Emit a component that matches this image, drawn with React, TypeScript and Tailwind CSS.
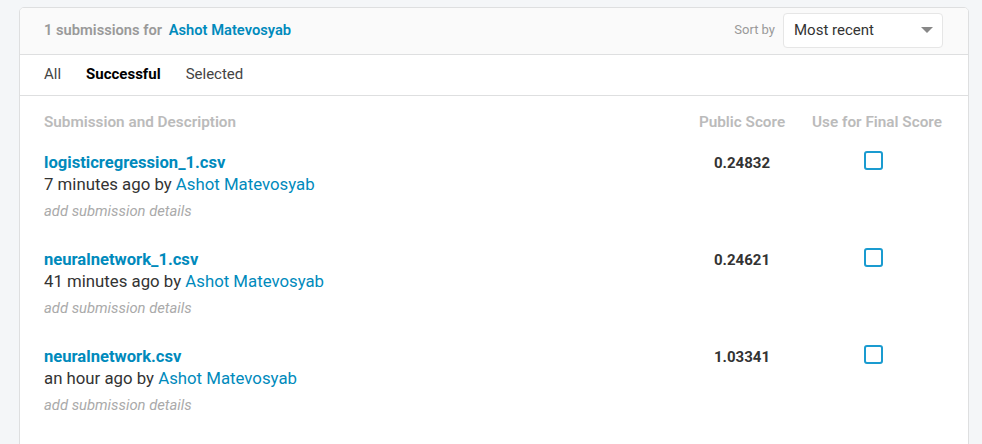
const rows = [
  { file: 'logisticregression_1.csv', when: '7 minutes ago', score: '0.24832' },
  { file: 'neuralnetwork_1.csv', when: '41 minutes ago', score: '0.24621' },
  { file: 'neuralnetwork.csv', when: 'an hour ago', score: '1.03341' },
]

export default function App() {
  return (
    <div className="min-h-screen bg-[#f4f6f8] pl-[19px] pr-[13px] pt-[7px] font-['Roboto',sans-serif]">
      {/* Card */}
      <div className="bg-white border border-[#dedfe0] rounded-t-[5px] overflow-hidden h-[440px]">
        {/* Header */}
        <div className="h-[47px] bg-[#fafafa] border-b border-[#dedfe0] flex items-center justify-between px-6">
          <div className="text-[14.7px] font-semibold text-[#999] -mt-[1px]">
            1 submissions for <span className="ml-[3px] text-[#008abc]">Ashot Matevosyab</span>
          </div>
          <div className="flex items-center gap-[8px] mr-[1px] -mt-[2px]">
            <span className="text-[13px] text-[#999]">Sort by</span>
            <div className="w-[160px] h-[35px] bg-white border border-[#e6e6e6] rounded-[4px] flex items-center justify-between pl-[10px] pr-[9px]">
              <span className="text-[15px] text-[#333]">Most recent</span>
              <svg width="12" height="6" viewBox="0 0 12 6"><path d="M0 0h12L6 6z" fill="#888" /></svg>
            </div>
          </div>
        </div>

        {/* Tabs */}
        <div className="h-[41px] pb-[2px] border-b border-[#dedfe0] flex items-center gap-[25px] px-6 text-[15px] text-[#444]">
          <span>All</span>
          <span className="font-bold text-black">Successful</span>
          <span>Selected</span>
        </div>

        {/* Table */}
        <div className="px-6">
          <div className="flex items-center pt-[16px] text-[15.3px] font-semibold text-[#bbb] leading-[20px]">
            <div className="flex-1">Submission and Description</div>
            <div className="w-[100px] text-center">Public Score</div>
            <div className="w-[134px] ml-[18px] text-center">Use for Final Score</div>
          </div>

          <div className="mt-[21px] flex flex-col gap-[29px]">
            {rows.map((r) => (
              <div key={r.file} className="flex items-start">
                <div className="flex-1">
                  <div className="text-[16.6px] font-bold text-[#008abc] leading-[20px]">{r.file}</div>
                  <div className="text-[16.8px] text-[#333] leading-[22px]">
                    {r.when} by <span className="text-[#008abc]">Ashot Matevosyab</span>
                  </div>
                  <div className="text-[14.8px] italic text-[#aaa] leading-[20px] mt-[6px]">add submission details</div>
                </div>
                <div className="w-[100px] text-center text-[15px] font-bold text-[#333] leading-[20px]">{r.score}</div>
                <div className="w-[134px] ml-[18px] flex justify-center -mt-[2px]">
                  <div className="w-[19px] h-[19px] border-2 border-[#1a9bd0] rounded-[3px] -ml-[7px]" />
                </div>
              </div>
            ))}
          </div>
        </div>
      </div>
    </div>
  )
}
